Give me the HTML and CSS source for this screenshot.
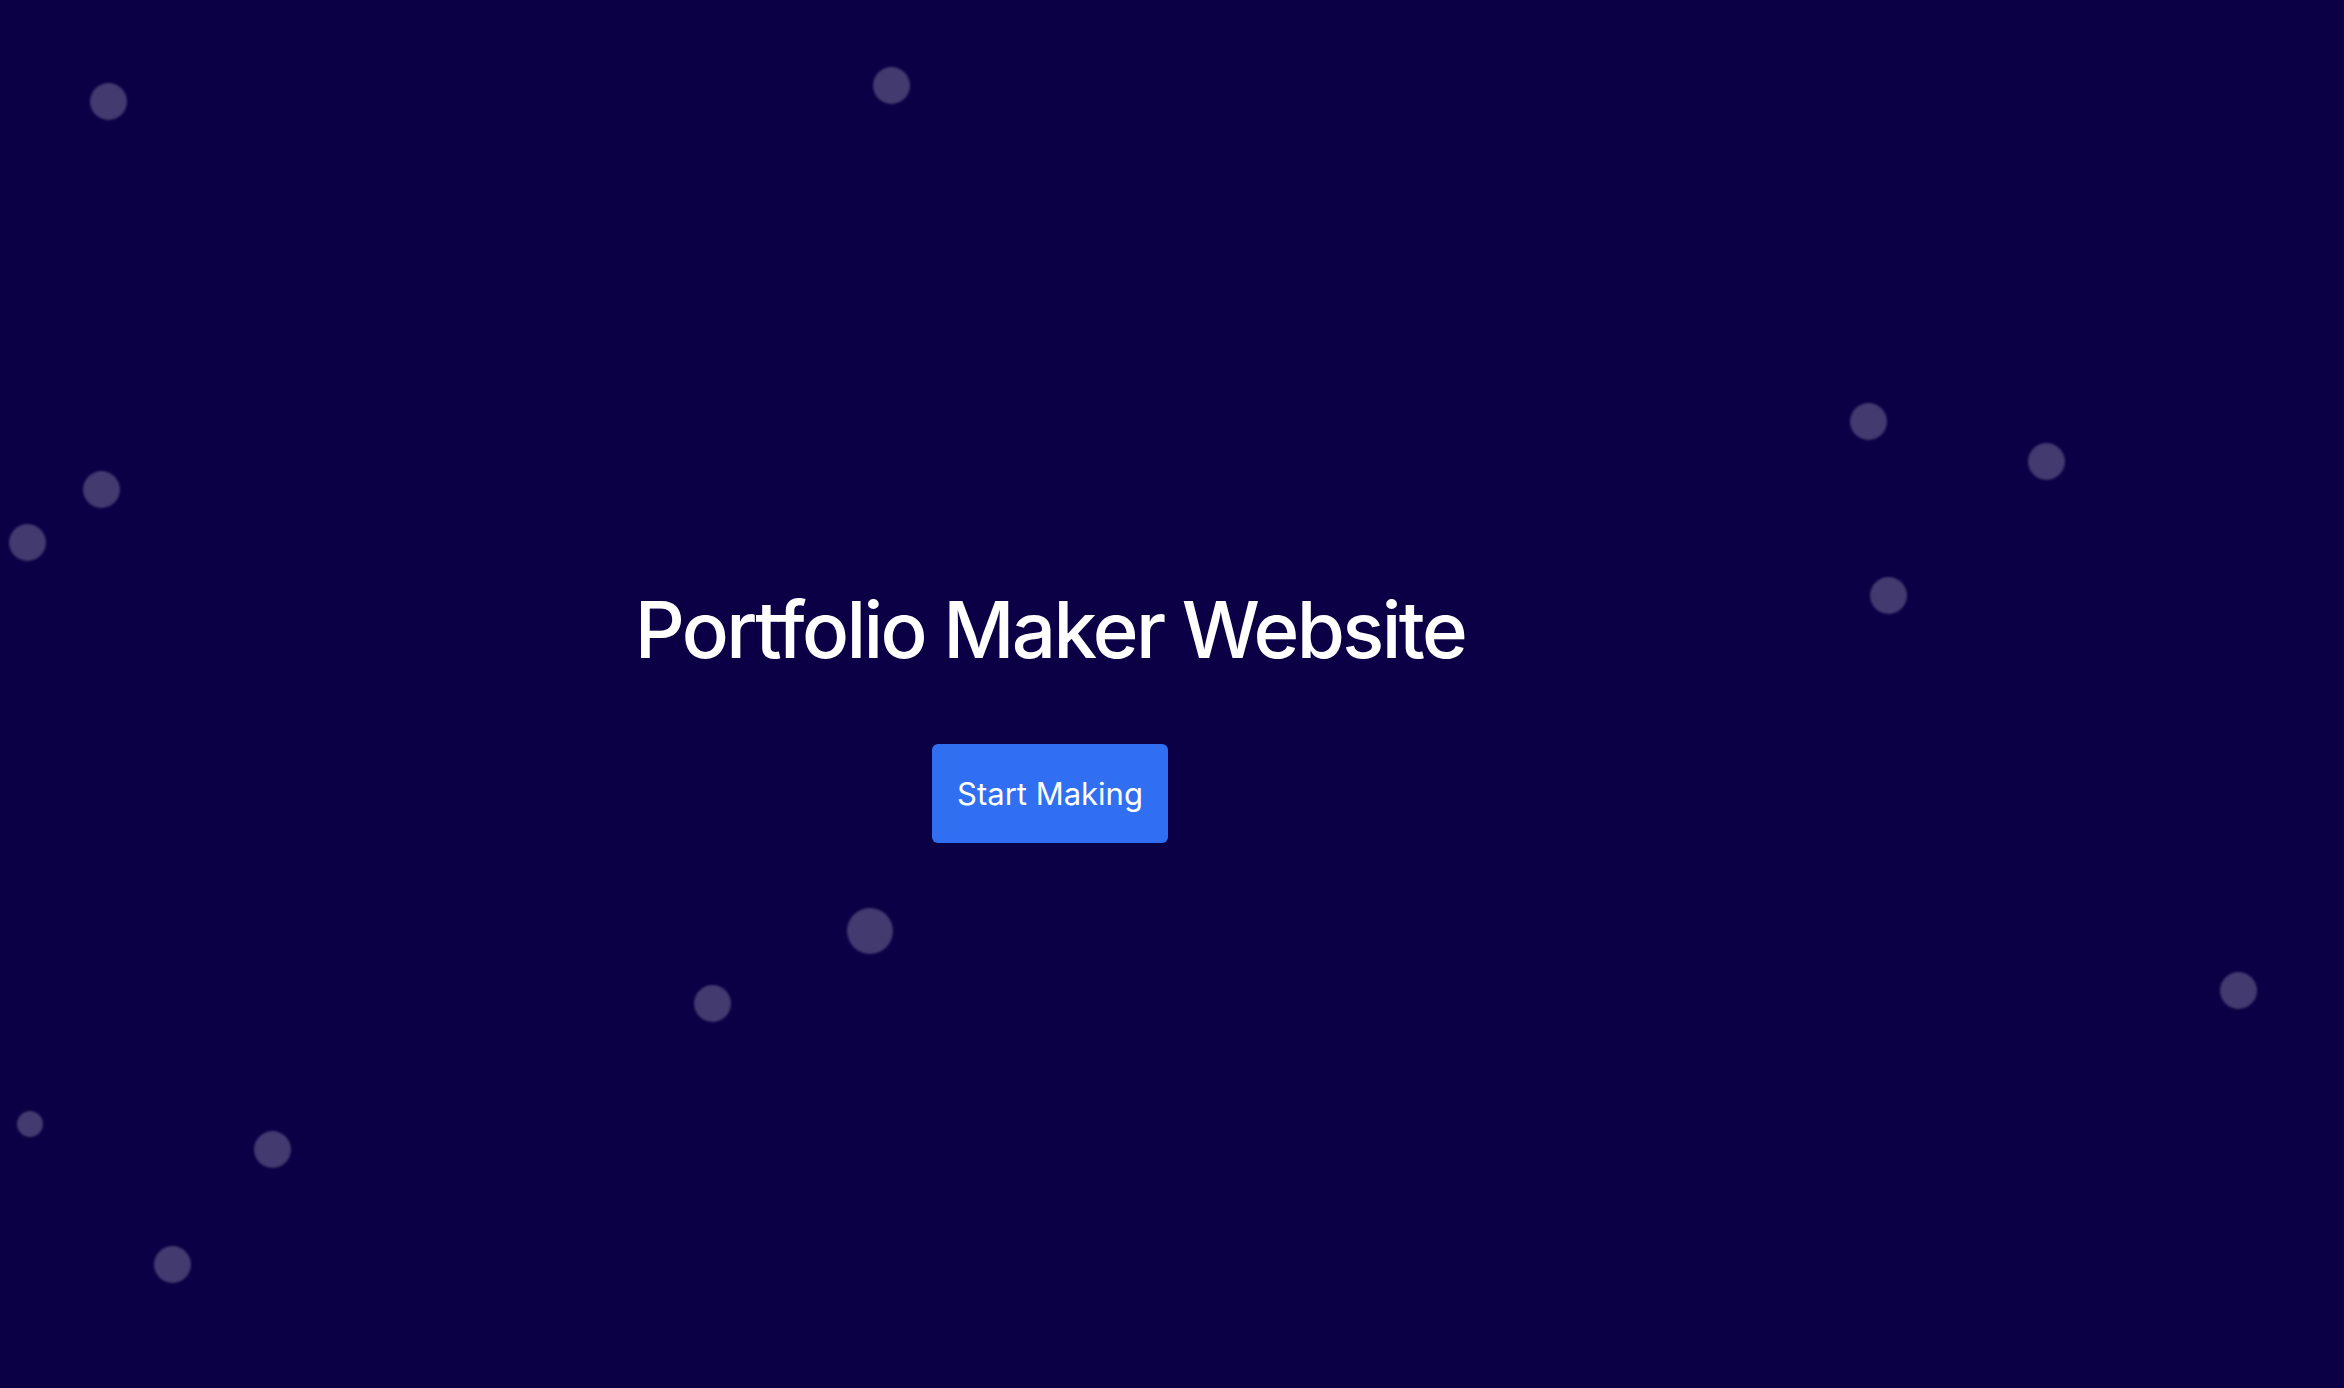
FILE: index.html
```html
<!DOCTYPE html>
<html lang="en">
<head>
<meta charset="utf-8">
<title>Portfolio Maker Website</title>
<link rel="stylesheet" href="styles.css">
</head>
<body>
<div class="page">
  <div class="particles" aria-hidden="true">
    <span class="dot" style="left:108px;top:101px"></span>
    <span class="dot" style="left:891px;top:85px"></span>
    <span class="dot" style="left:101px;top:489px"></span>
    <span class="dot" style="left:27px;top:542px"></span>
    <span class="dot" style="left:1868px;top:421px"></span>
    <span class="dot" style="left:2046px;top:461px"></span>
    <span class="dot" style="left:1888px;top:595px"></span>
    <span class="dot dot-lg" style="left:870px;top:931px"></span>
    <span class="dot" style="left:712px;top:1003px"></span>
    <span class="dot" style="left:2238px;top:990px"></span>
    <span class="dot dot-sm" style="left:30px;top:1124px"></span>
    <span class="dot" style="left:272px;top:1149px"></span>
    <span class="dot" style="left:172px;top:1264px"></span>
  </div>
  <main class="hero">
    <h1 class="hero-title">Portfolio Maker Website</h1>
    <button class="hero-btn" type="button">Start Making</button>
  </main>
</div>
</body>
</html>
```

FILE: styles.css
```css
html, body {
  margin: 0;
  padding: 0;
  height: 100%;
}

body {
  background: #0b0045;
  font-family: Inter, "Noto Sans", "Liberation Sans", sans-serif;
  color: #ffffff;
  overflow: hidden;
}

.page {
  position: relative;
  width: 100%;
  height: 100vh;
}

.particles {
  position: absolute;
  inset: 0;
  pointer-events: none;
}

.dot {
  position: absolute;
  width: 37px;
  height: 37px;
  margin: -18.5px 0 0 -18.5px;
  border-radius: 50%;
  background: #433a70;
  filter: blur(0.8px);
}

.dot-lg {
  width: 46px;
  height: 46px;
  margin: -23px 0 0 -23px;
}

.dot-sm {
  width: 26px;
  height: 26px;
  margin: -13px 0 0 -13px;
}

.hero {
  position: relative;
  height: 100%;
  box-sizing: border-box;
  display: flex;
  flex-direction: column;
  align-items: center;
  justify-content: center;
  padding: 38px 244px 0 0;
}

.hero-title {
  margin: 0 0 67px;
  font-size: 78px;
  font-weight: 500;
  line-height: 1.2;
  letter-spacing: -2.6px;
  font-variant-ligatures: none;
  font-feature-settings: "liga" 0, "calt" 0;
}

.hero-btn {
  font-family: Inter, "Noto Sans", "Liberation Sans", sans-serif;
  font-size: 31px;
  font-weight: 400;
  color: #ffffff;
  background: #306ff2;
  border: none;
  border-radius: 6px;
  width: 236px;
  height: 99px;
  padding: 0;
  cursor: pointer;
}
```
